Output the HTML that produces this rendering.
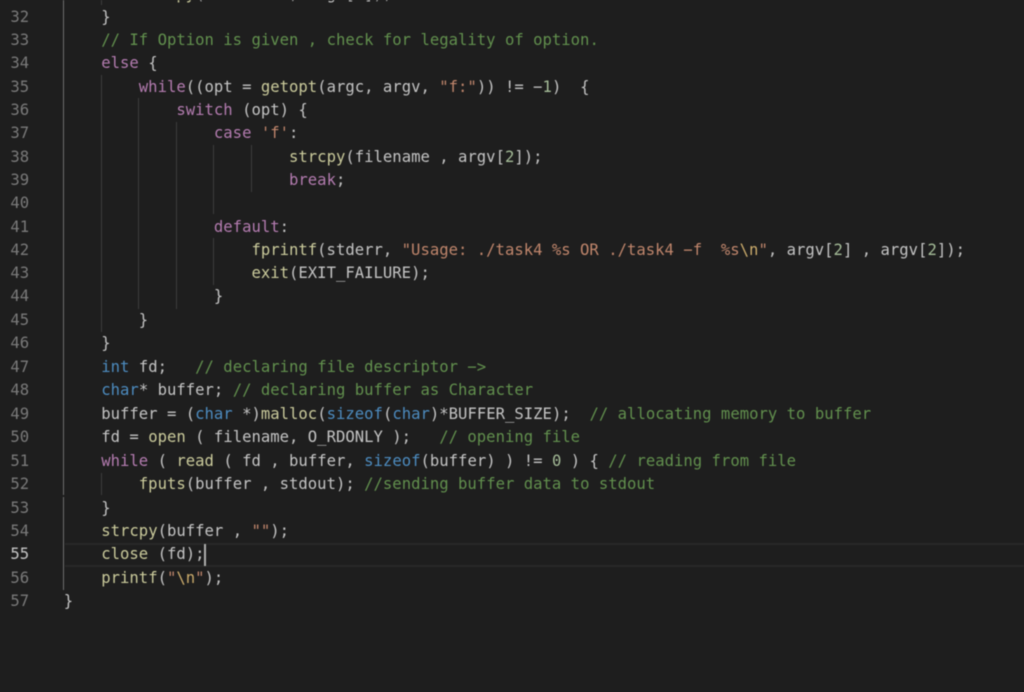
<!DOCTYPE html>
<html><head><meta charset="utf-8"><style>
html,body{margin:0;padding:0;width:1024px;height:692px;overflow:hidden;background:#1e1e1e}
#e{position:absolute;left:0;top:0;width:1024px;height:692px;overflow:hidden;filter:blur(.45px);font:15.6px/23px "DejaVu Sans Mono","Liberation Mono",monospace;color:#c4c4c4;font-variant-ligatures:none}
.r{position:absolute;left:0;height:23px;white-space:pre}
.n{position:absolute;left:0;width:29.2px;text-align:right;color:#7a7a7a}
.c{position:absolute;left:63.7px;white-space:pre}
.k{color:#b47cb0}.t{color:#4d8cc0}.f{color:#cbcb9c}.s{color:#c0866c}.g{color:#62904e}.d{color:#a5bc98}.x{color:#ccac6c}
.v{position:absolute;width:1px;background:#3e3e3e}
</style></head><body><div id="e">
<div style="position:absolute;left:65px;top:543px;width:959px;height:24px;box-sizing:border-box;border-top:2px solid #282828;border-bottom:2px solid #282828"></div>
<div class="v" style="left:63px;top:0;height:495px;background:#707070"></div>
<div class="v" style="left:63px;top:497px;height:93px;background:#707070"></div>
<div class="v" style="left:101px;top:0;height:5px"></div>
<div class="v" style="left:101px;top:75px;height:257px"></div>
<div class="v" style="left:101px;top:473px;height:22px"></div>
<div class="v" style="left:138px;top:98px;height:211px"></div>
<div class="v" style="left:176px;top:122px;height:187px"></div>
<div class="v" style="left:213px;top:145px;height:69px"></div>
<div class="v" style="left:213px;top:238px;height:47px"></div>
<div class="v" style="left:251px;top:145px;height:47px"></div>
<div style="position:absolute;left:204px;top:544px;width:2px;height:22px;background:#aeafad"></div>

<div class="r" style="top:-17px"><span class="c">        <span class="f">strcpy</span>(filename , argv[<span class="d">1</span>]);</span></div>
<div class="r" style="top:6px"><span class="n">32</span><span class="c">    }</span></div>
<div class="r" style="top:29px"><span class="n">33</span><span class="c">    <span class="g">// If Option is given , check for legality of option.</span></span></div>
<div class="r" style="top:52px"><span class="n">34</span><span class="c">    <span class="k">else</span> {</span></div>
<div class="r" style="top:76px"><span class="n">35</span><span class="c">        <span class="k">while</span>((opt = <span class="f">getopt</span>(argc, argv, <span class="s">"f:"</span>)) != −<span class="d">1</span>)  {</span></div>
<div class="r" style="top:99px"><span class="n">36</span><span class="c">            <span class="k">switch</span> (opt) {</span></div>
<div class="r" style="top:122px"><span class="n">37</span><span class="c">                <span class="k">case</span> <span class="s">'f'</span>:</span></div>
<div class="r" style="top:146px"><span class="n">38</span><span class="c">                        <span class="f">strcpy</span>(filename , argv[<span class="d">2</span>]);</span></div>
<div class="r" style="top:169px"><span class="n">39</span><span class="c">                        <span class="k">break</span>;</span></div>
<div class="r" style="top:192px"><span class="n">40</span></div>
<div class="r" style="top:216px"><span class="n">41</span><span class="c">                <span class="k">default</span>:</span></div>
<div class="r" style="top:239px"><span class="n">42</span><span class="c">                    <span class="f">fprintf</span>(stderr, <span class="s">"Usage: ./task4 %s OR ./task4 −f  %s<span class="x">\n</span>"</span>, argv[<span class="d">2</span>] , argv[<span class="d">2</span>]);</span></div>
<div class="r" style="top:262px"><span class="n">43</span><span class="c">                    <span class="f">exit</span>(EXIT_FAILURE);</span></div>
<div class="r" style="top:285px"><span class="n">44</span><span class="c">                }</span></div>
<div class="r" style="top:309px"><span class="n">45</span><span class="c">        }</span></div>
<div class="r" style="top:332px"><span class="n">46</span><span class="c">    }</span></div>
<div class="r" style="top:356px"><span class="n">47</span><span class="c">    <span class="t">int</span> fd;   <span class="g">// declaring file descriptor −&gt;</span></span></div>
<div class="r" style="top:379px"><span class="n">48</span><span class="c">    <span class="t">char</span>* buffer; <span class="g">// declaring buffer as Character</span></span></div>
<div class="r" style="top:403px"><span class="n">49</span><span class="c">    buffer = (<span class="t">char</span> *)<span class="f">malloc</span>(<span class="t">sizeof</span>(<span class="t">char</span>)*BUFFER_SIZE);  <span class="g">// allocating memory to buffer</span></span></div>
<div class="r" style="top:426px"><span class="n">50</span><span class="c">    fd = <span class="f">open</span> ( filename, O_RDONLY );   <span class="g">// opening file</span></span></div>
<div class="r" style="top:450px"><span class="n">51</span><span class="c">    <span class="k">while</span> ( <span class="f">read</span> ( fd , buffer, <span class="t">sizeof</span>(buffer) ) != <span class="d">0</span> ) { <span class="g">// reading from file</span></span></div>
<div class="r" style="top:473px"><span class="n">52</span><span class="c">        <span class="f">fputs</span>(buffer , stdout); <span class="g">//sending buffer data to stdout</span></span></div>
<div class="r" style="top:497px"><span class="n">53</span><span class="c">    }</span></div>
<div class="r" style="top:520px"><span class="n">54</span><span class="c">    <span class="f">strcpy</span>(buffer , <span class="s">""</span>);</span></div>
<div class="r" style="top:543px"><span class="n" style="color:#c6c6c6">55</span><span class="c">    <span class="f">close</span> (fd);</span></div>
<div class="r" style="top:567px"><span class="n">56</span><span class="c">    <span class="f">printf</span>(<span class="s">"<span class="x">\n</span>"</span>);</span></div>
<div class="r" style="top:590px"><span class="n">57</span><span class="c">}</span></div>
</div></body></html>
